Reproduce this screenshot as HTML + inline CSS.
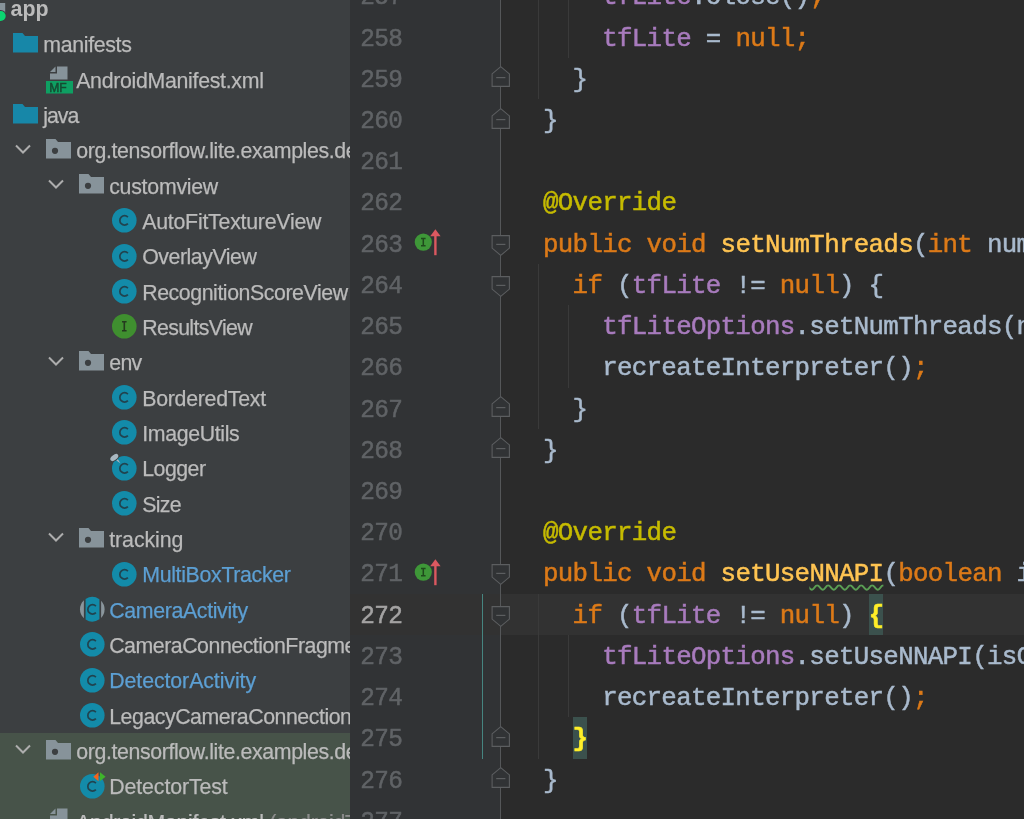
<!DOCTYPE html><html><head><meta charset="utf-8"><title>IDE</title><style>
*{box-sizing:border-box;margin:0;padding:0}
html,body{width:1024px;height:819px;overflow:hidden;background:#2b2b2b}
body{position:relative;will-change:transform;font-family:"Liberation Sans",sans-serif}
#side{position:absolute;left:0;top:0;width:350px;height:819px;background:#3c3f41;overflow:hidden}
#testbg{position:absolute;left:0;top:733px;width:350px;height:90px;background:#475349}
.row{position:absolute;left:0;width:700px;height:35.33px;line-height:35.33px;font-size:21.3px;color:#bbbbbb;white-space:nowrap;-webkit-text-stroke:0.25px currentColor}
.row span.t{position:absolute;top:1.6px;margin-left:-0.8px}
.row.b span.t{color:#5c9fd3}
.row svg{position:absolute}
#gutter{position:absolute;left:350px;top:0;width:152.3px;height:819px;background:#313335}
#ed{position:absolute;left:500px;top:0;width:524px;height:819px;background:#2b2b2b;overflow:hidden}
#cur{position:absolute;left:350px;width:674px;background:#323232}
.ln{position:absolute;left:359px;width:44.4px;text-align:left;transform:scaleX(0.945);transform-origin:22.4px 50%;font-family:"Liberation Mono",monospace;font-size:25.8px;letter-spacing:-0.683px;color:#606366;white-space:pre;-webkit-text-stroke:0.5px currentColor}
.ln.c{color:#a4a3a3}
.cl{position:absolute;left:513.4px;font-family:"Liberation Mono",monospace;font-size:25.8px;letter-spacing:-0.683px;color:#a9bacd;white-space:pre;-webkit-text-stroke:0.5px currentColor}
.k{color:#dc7a18}.f{color:#a87bbd}.a{color:#c6bb00}.m{color:#ffc452}
.br{color:#ffef28;font-weight:bold}
.brbg{position:absolute;width:14.8px;background:#3b514d}
.wv{text-decoration:underline wavy #5a9e54 1.5px;text-underline-offset:3px}
.g{position:absolute;width:1px;background:#3a3a3a}
#fold{position:absolute;left:500.1px;top:0;width:1.3px;height:819px;background:#555759}
svg.abs{position:absolute;overflow:visible}
</style></head><body>
<div id="side"><div id="testbg"></div>
<div class="row" style="top:-8.67px"><svg class="abs" style="left:0;top:2.66px" width="8" height="30" viewBox="0 0 8 30"><rect x="0" y="9" width="5.2" height="10" fill="#87939a"/><circle cx="0.6" cy="22" r="6" fill="#3c3f41"/><circle cx="0.6" cy="22" r="5.1" fill="#0bd671"/></svg><span class="t" style="left:11.4px;font-weight:bold;font-size:21.4px;top:0.9px;-webkit-text-stroke:0">app</span></div>
<div class="row" style="top:26.66px"><svg class="abs" style="left:13.2px;top:6.66px" width="25" height="20" viewBox="0 0 25 20"><path d="M0 0H9.5L12 3H25V19.5H0Z" fill="#1787a8"/></svg><span class="t" style="left:44px;letter-spacing:-0.308px">manifests</span></div>
<div class="row" style="top:61.99px"><svg class="abs" style="left:46px;top:3.66px" width="28" height="28" viewBox="0 0 28 28"><path d="M11 0.5H21.5V13.5H4V7.5H11Z" fill="#87939a"/><path d="M4 6L9.5 0.5V6Z" fill="#87939a"/><rect x="0" y="15" width="27" height="12.5" fill="#0e9f62"/><text x="3.2" y="26" font-family="Liberation Sans,sans-serif" font-size="12.6" textLength="17.5" lengthAdjust="spacingAndGlyphs" fill="#164a32" stroke="#164a32" stroke-width="0.5">MF</text></svg><span class="t" style="left:77px;letter-spacing:-0.293px">AndroidManifest.xml</span></div>
<div class="row" style="top:97.32px"><svg class="abs" style="left:13.2px;top:6.66px" width="25" height="20" viewBox="0 0 25 20"><path d="M0 0H9.5L12 3H25V19.5H0Z" fill="#1787a8"/></svg><span class="t" style="left:44px;letter-spacing:-0.989px">java</span></div>
<div class="row" style="top:132.65px"><svg class="abs" style="left:15px;top:11.16px" width="16" height="10" viewBox="0 0 16 10"><path d="M1 1.5L8 8.5L15 1.5" fill="none" stroke="#adadad" stroke-width="2"/></svg><svg class="abs" style="left:46px;top:6.46px" width="25" height="20" viewBox="0 0 25 20"><path d="M0 0H9.5L12 3H25V19.5H0Z" fill="#87939a"/><circle cx="9" cy="11.8" r="3.1" fill="#3c3f41"/></svg><span class="t" style="left:77px;letter-spacing:-0.366px">org.tensorflow.lite.examples.de</span></div>
<div class="row" style="top:167.98px"><svg class="abs" style="left:48px;top:11.16px" width="16" height="10" viewBox="0 0 16 10"><path d="M1 1.5L8 8.5L15 1.5" fill="none" stroke="#adadad" stroke-width="2"/></svg><svg class="abs" style="left:79px;top:6.46px" width="25" height="20" viewBox="0 0 25 20"><path d="M0 0H9.5L12 3H25V19.5H0Z" fill="#87939a"/><circle cx="9" cy="11.8" r="3.1" fill="#3c3f41"/></svg><span class="t" style="left:110px;letter-spacing:-0.244px">customview</span></div>
<div class="row" style="top:203.31px"><svg class="abs" style="left:112.1px;top:4.96px" width="24.6" height="24.6" viewBox="0 0 24.6 24.6"><circle cx="12.3" cy="12.3" r="12.3" fill="#138ba9"/><path d="M15.9 9.1A4.7 4.7 0 1 0 15.9 15.7" fill="none" stroke="#21434f" stroke-width="1.7"/></svg><span class="t" style="left:143px;letter-spacing:-0.225px">AutoFitTextureView</span></div>
<div class="row" style="top:238.64px"><svg class="abs" style="left:112.1px;top:4.96px" width="24.6" height="24.6" viewBox="0 0 24.6 24.6"><circle cx="12.3" cy="12.3" r="12.3" fill="#138ba9"/><path d="M15.9 9.1A4.7 4.7 0 1 0 15.9 15.7" fill="none" stroke="#21434f" stroke-width="1.7"/></svg><span class="t" style="left:143px;letter-spacing:-0.448px">OverlayView</span></div>
<div class="row" style="top:273.97px"><svg class="abs" style="left:112.1px;top:4.96px" width="24.6" height="24.6" viewBox="0 0 24.6 24.6"><circle cx="12.3" cy="12.3" r="12.3" fill="#138ba9"/><path d="M15.9 9.1A4.7 4.7 0 1 0 15.9 15.7" fill="none" stroke="#21434f" stroke-width="1.7"/></svg><span class="t" style="left:143px;letter-spacing:-0.423px">RecognitionScoreView</span></div>
<div class="row" style="top:309.30px"><svg class="abs" style="left:112.1px;top:4.96px" width="24.6" height="24.6" viewBox="0 0 24.6 24.6"><circle cx="12.3" cy="12.3" r="12.3" fill="#3f8f2f"/><path d="M10 7.8H14.6M10 16.8H14.6M12.3 7.8V16.8" fill="none" stroke="#243a1e" stroke-width="1.6"/></svg><span class="t" style="left:143px;letter-spacing:-0.639px">ResultsView</span></div>
<div class="row" style="top:344.63px"><svg class="abs" style="left:48px;top:11.16px" width="16" height="10" viewBox="0 0 16 10"><path d="M1 1.5L8 8.5L15 1.5" fill="none" stroke="#adadad" stroke-width="2"/></svg><svg class="abs" style="left:79px;top:6.46px" width="25" height="20" viewBox="0 0 25 20"><path d="M0 0H9.5L12 3H25V19.5H0Z" fill="#87939a"/><circle cx="9" cy="11.8" r="3.1" fill="#3c3f41"/></svg><span class="t" style="left:110px;letter-spacing:-0.645px">env</span></div>
<div class="row" style="top:379.96px"><svg class="abs" style="left:112.1px;top:4.96px" width="24.6" height="24.6" viewBox="0 0 24.6 24.6"><circle cx="12.3" cy="12.3" r="12.3" fill="#138ba9"/><path d="M15.9 9.1A4.7 4.7 0 1 0 15.9 15.7" fill="none" stroke="#21434f" stroke-width="1.7"/></svg><span class="t" style="left:143px;letter-spacing:-0.253px">BorderedText</span></div>
<div class="row" style="top:415.29px"><svg class="abs" style="left:112.1px;top:4.96px" width="24.6" height="24.6" viewBox="0 0 24.6 24.6"><circle cx="12.3" cy="12.3" r="12.3" fill="#138ba9"/><path d="M15.9 9.1A4.7 4.7 0 1 0 15.9 15.7" fill="none" stroke="#21434f" stroke-width="1.7"/></svg><span class="t" style="left:143px;letter-spacing:-0.340px">ImageUtils</span></div>
<div class="row" style="top:450.62px"><svg class="abs" style="left:112.1px;top:4.96px" width="24.6" height="24.6" viewBox="0 0 24.6 24.6"><circle cx="12.3" cy="12.3" r="12.3" fill="#138ba9"/><path d="M15.9 9.1A4.7 4.7 0 1 0 15.9 15.7" fill="none" stroke="#21434f" stroke-width="1.7"/></svg><svg class="abs" style="left:108.1px;top:0.66px" width="16" height="16" viewBox="0 0 16 16"><ellipse cx="6.3" cy="6.5" rx="5.6" ry="3.6" transform="rotate(-38 6.3 6.5)" fill="#3c3f41"/><ellipse cx="6.3" cy="6.5" rx="4.6" ry="2.5" transform="rotate(-38 6.3 6.5)" fill="#a9b7c0"/><path d="M8.3 9.6L9.9 8.2L12.4 12.2Z" fill="#a9b7c0"/></svg><span class="t" style="left:143px;letter-spacing:-0.498px">Logger</span></div>
<div class="row" style="top:485.95px"><svg class="abs" style="left:112.1px;top:4.96px" width="24.6" height="24.6" viewBox="0 0 24.6 24.6"><circle cx="12.3" cy="12.3" r="12.3" fill="#138ba9"/><path d="M15.9 9.1A4.7 4.7 0 1 0 15.9 15.7" fill="none" stroke="#21434f" stroke-width="1.7"/></svg><span class="t" style="left:143px;letter-spacing:-0.669px">Size</span></div>
<div class="row" style="top:521.28px"><svg class="abs" style="left:48px;top:11.16px" width="16" height="10" viewBox="0 0 16 10"><path d="M1 1.5L8 8.5L15 1.5" fill="none" stroke="#adadad" stroke-width="2"/></svg><svg class="abs" style="left:79px;top:6.46px" width="25" height="20" viewBox="0 0 25 20"><path d="M0 0H9.5L12 3H25V19.5H0Z" fill="#87939a"/><circle cx="9" cy="11.8" r="3.1" fill="#3c3f41"/></svg><span class="t" style="left:110px;letter-spacing:-0.050px">tracking</span></div>
<div class="row b" style="top:556.61px"><svg class="abs" style="left:112.1px;top:4.96px" width="24.6" height="24.6" viewBox="0 0 24.6 24.6"><circle cx="12.3" cy="12.3" r="12.3" fill="#138ba9"/><path d="M15.9 9.1A4.7 4.7 0 1 0 15.9 15.7" fill="none" stroke="#21434f" stroke-width="1.7"/></svg><span class="t" style="left:143px;letter-spacing:-0.311px">MultiBoxTracker</span></div>
<div class="row b" style="top:591.94px"><svg class="abs" style="left:79.6px;top:4.96px" width="24.6" height="24.6" viewBox="0 0 24.6 24.6"><path d="M3.9 3.315A12.3 12.3 0 0 0 3.9 21.285Z" fill="#8a969c"/><path d="M5.6 1.985A12.3 12.3 0 0 1 19.4 2.256V22.344A12.3 12.3 0 0 1 5.6 22.615Z" fill="#138ba9"/><path d="M21.1 3.706A12.3 12.3 0 0 1 21.1 20.894Z" fill="#8a969c"/><path d="M15.9 9.1A4.7 4.7 0 1 0 15.9 15.7" fill="none" stroke="#21434f" stroke-width="1.7"/></svg><span class="t" style="left:110px;letter-spacing:-0.334px">CameraActivity</span></div>
<div class="row" style="top:627.27px"><svg class="abs" style="left:79.6px;top:4.96px" width="24.6" height="24.6" viewBox="0 0 24.6 24.6"><circle cx="12.3" cy="12.3" r="12.3" fill="#138ba9"/><path d="M15.9 9.1A4.7 4.7 0 1 0 15.9 15.7" fill="none" stroke="#21434f" stroke-width="1.7"/></svg><span class="t" style="left:110px;letter-spacing:-0.459px">CameraConnectionFragme</span></div>
<div class="row b" style="top:662.60px"><svg class="abs" style="left:79.6px;top:4.96px" width="24.6" height="24.6" viewBox="0 0 24.6 24.6"><circle cx="12.3" cy="12.3" r="12.3" fill="#138ba9"/><path d="M15.9 9.1A4.7 4.7 0 1 0 15.9 15.7" fill="none" stroke="#21434f" stroke-width="1.7"/></svg><span class="t" style="left:110px;letter-spacing:-0.070px">DetectorActivity</span></div>
<div class="row" style="top:697.93px"><svg class="abs" style="left:79.6px;top:4.96px" width="24.6" height="24.6" viewBox="0 0 24.6 24.6"><circle cx="12.3" cy="12.3" r="12.3" fill="#138ba9"/><path d="M15.9 9.1A4.7 4.7 0 1 0 15.9 15.7" fill="none" stroke="#21434f" stroke-width="1.7"/></svg><span class="t" style="left:110px;letter-spacing:-0.451px">LegacyCameraConnection</span></div>
<div class="row" style="top:733.26px"><svg class="abs" style="left:15px;top:11.16px" width="16" height="10" viewBox="0 0 16 10"><path d="M1 1.5L8 8.5L15 1.5" fill="none" stroke="#adadad" stroke-width="2"/></svg><svg class="abs" style="left:46px;top:6.46px" width="25" height="20" viewBox="0 0 25 20"><path d="M0 0H9.5L12 3H25V19.5H0Z" fill="#87939a"/><circle cx="9" cy="11.8" r="3.1" fill="#3c3f41"/></svg><span class="t" style="left:77px;letter-spacing:-0.366px">org.tensorflow.lite.examples.de</span></div>
<div class="row" style="top:768.59px"><svg class="abs" style="left:79.6px;top:4.96px" width="24.6" height="24.6" viewBox="0 0 24.6 24.6"><circle cx="12.3" cy="12.3" r="12.3" fill="#138ba9"/><path d="M15.9 9.1A4.7 4.7 0 1 0 15.9 15.7" fill="none" stroke="#21434f" stroke-width="1.7"/></svg><svg class="abs" style="left:93.19999999999999px;top:3.26px" width="13" height="10" viewBox="0 0 13 10"><path d="M5.5 0.3V9.3L0.3 4.8Z" fill="#f2641f"/><path d="M7 0.3V9L12.6 4.8Z" fill="#3fb52b"/></svg><span class="t" style="left:110px;letter-spacing:-0.088px">DetectorTest</span></div>
<div class="row" style="top:803.92px"><svg class="abs" style="left:46px;top:3.66px" width="28" height="28" viewBox="0 0 28 28"><path d="M11 0.5H21.5V13.5H4V7.5H11Z" fill="#87939a"/><path d="M4 6L9.5 0.5V6Z" fill="#87939a"/><rect x="0" y="15" width="27" height="12.5" fill="#0e9f62"/><text x="3.2" y="26" font-family="Liberation Sans,sans-serif" font-size="12.6" textLength="17.5" lengthAdjust="spacingAndGlyphs" fill="#164a32" stroke="#164a32" stroke-width="0.5">MF</text></svg><span class="t" style="left:77px;letter-spacing:-0.293px">AndroidManifest.xml <span style="color:#8c8c8c">(androidTest)</span></span></div>
</div>
<div id="gutter"></div>
<div id="ed"></div>
<div id="cur" style="top:593.78px;height:41.22px"></div>
<div class="g" style="left:538px;top:-65.74px;height:164.88px"></div>
<div class="g" style="left:567.5px;top:-65.74px;height:123.66px"></div>
<div class="g" style="left:538px;top:264.02px;height:164.88px"></div>
<div class="g" style="left:567.5px;top:305.24px;height:82.44px"></div>
<div class="g" style="left:538px;top:593.78px;height:164.88px"></div>
<div class="g" style="left:567.5px;top:635.00px;height:82.44px"></div>
<div class="brbg" style="left:868.60px;top:593.78px;height:41.22px"></div>
<div class="brbg" style="left:572.60px;top:717.44px;height:41.22px"></div>
<div id="fold"></div>
<div style="position:absolute;left:482px;width:1.4px;background:#468580;top:593.78px;height:164.88px"></div>
<svg class="abs" style="left:491px;top:66.33px" width="20" height="22" viewBox="0 0 20 22"><path d="M1.1 7.9L9.75 0.6L18.4 7.9V20.4H1.1Z" fill="#313335" stroke="#5c5e60" stroke-width="1.1"/><path d="M5.2 11.6H14.4" stroke="#5c5e60" stroke-width="1.2"/></svg>
<svg class="abs" style="left:491px;top:107.55px" width="20" height="22" viewBox="0 0 20 22"><path d="M1.1 7.9L9.75 0.6L18.4 7.9V20.4H1.1Z" fill="#313335" stroke="#5c5e60" stroke-width="1.1"/><path d="M5.2 11.6H14.4" stroke="#5c5e60" stroke-width="1.2"/></svg>
<svg class="abs" style="left:491px;top:396.09px" width="20" height="22" viewBox="0 0 20 22"><path d="M1.1 7.9L9.75 0.6L18.4 7.9V20.4H1.1Z" fill="#313335" stroke="#5c5e60" stroke-width="1.1"/><path d="M5.2 11.6H14.4" stroke="#5c5e60" stroke-width="1.2"/></svg>
<svg class="abs" style="left:491px;top:437.31px" width="20" height="22" viewBox="0 0 20 22"><path d="M1.1 7.9L9.75 0.6L18.4 7.9V20.4H1.1Z" fill="#313335" stroke="#5c5e60" stroke-width="1.1"/><path d="M5.2 11.6H14.4" stroke="#5c5e60" stroke-width="1.2"/></svg>
<svg class="abs" style="left:491px;top:725.85px" width="20" height="22" viewBox="0 0 20 22"><path d="M1.1 7.9L9.75 0.6L18.4 7.9V20.4H1.1Z" fill="#313335" stroke="#5c5e60" stroke-width="1.1"/><path d="M5.2 11.6H14.4" stroke="#5c5e60" stroke-width="1.2"/></svg>
<svg class="abs" style="left:491px;top:767.07px" width="20" height="22" viewBox="0 0 20 22"><path d="M1.1 7.9L9.75 0.6L18.4 7.9V20.4H1.1Z" fill="#313335" stroke="#5c5e60" stroke-width="1.1"/><path d="M5.2 11.6H14.4" stroke="#5c5e60" stroke-width="1.2"/></svg>
<svg class="abs" style="left:491px;top:234.61px" width="20" height="22" viewBox="0 0 20 22"><path d="M1.1 0.6H18.4V13.1L9.75 20.4L1.1 13.1Z" fill="#313335" stroke="#5c5e60" stroke-width="1.1"/><path d="M5.2 9.4H14.4" stroke="#5c5e60" stroke-width="1.2"/></svg>
<svg class="abs" style="left:491px;top:275.83px" width="20" height="22" viewBox="0 0 20 22"><path d="M1.1 0.6H18.4V13.1L9.75 20.4L1.1 13.1Z" fill="#313335" stroke="#5c5e60" stroke-width="1.1"/><path d="M5.2 9.4H14.4" stroke="#5c5e60" stroke-width="1.2"/></svg>
<svg class="abs" style="left:491px;top:564.37px" width="20" height="22" viewBox="0 0 20 22"><path d="M1.1 0.6H18.4V13.1L9.75 20.4L1.1 13.1Z" fill="#313335" stroke="#5c5e60" stroke-width="1.1"/><path d="M5.2 9.4H14.4" stroke="#5c5e60" stroke-width="1.2"/></svg>
<svg class="abs" style="left:491px;top:605.59px" width="20" height="22" viewBox="0 0 20 22"><path d="M1.1 0.6H18.4V13.1L9.75 20.4L1.1 13.1Z" fill="#313335" stroke="#5c5e60" stroke-width="1.1"/><path d="M5.2 9.4H14.4" stroke="#5c5e60" stroke-width="1.2"/></svg>
<svg class="abs" style="left:414px;top:229.41px" width="28" height="28" viewBox="0 0 28 28"><circle cx="9.3" cy="13.1" r="8.6" fill="#3e9738"/><path d="M7 9.4H11.6M7 16.8H11.6M9.3 9.4V16.8" stroke="#1f4a1c" stroke-width="1.5" fill="none"/><path d="M21.4 26.2V6" stroke="#db5860" stroke-width="2.4"/><path d="M16.2 7.3L21.4 0.3L26.6 7.3Z" fill="#db5860"/></svg>
<svg class="abs" style="left:414px;top:559.17px" width="28" height="28" viewBox="0 0 28 28"><circle cx="9.3" cy="13.1" r="8.6" fill="#3e9738"/><path d="M7 9.4H11.6M7 16.8H11.6M9.3 9.4V16.8" stroke="#1f4a1c" stroke-width="1.5" fill="none"/><path d="M21.4 26.2V6" stroke="#db5860" stroke-width="2.4"/><path d="M16.2 7.3L21.4 0.3L26.6 7.3Z" fill="#db5860"/></svg>
<div class="ln" style="top:-22.62px;line-height:41.22px">257</div>
<div class="ln" style="top:18.60px;line-height:41.22px">258</div>
<div class="ln" style="top:59.82px;line-height:41.22px">259</div>
<div class="ln" style="top:101.04px;line-height:41.22px">260</div>
<div class="ln" style="top:142.26px;line-height:41.22px">261</div>
<div class="ln" style="top:183.48px;line-height:41.22px">262</div>
<div class="ln" style="top:224.70px;line-height:41.22px">263</div>
<div class="ln" style="top:265.92px;line-height:41.22px">264</div>
<div class="ln" style="top:307.14px;line-height:41.22px">265</div>
<div class="ln" style="top:348.36px;line-height:41.22px">266</div>
<div class="ln" style="top:389.58px;line-height:41.22px">267</div>
<div class="ln" style="top:430.80px;line-height:41.22px">268</div>
<div class="ln" style="top:472.02px;line-height:41.22px">269</div>
<div class="ln" style="top:513.24px;line-height:41.22px">270</div>
<div class="ln" style="top:554.46px;line-height:41.22px">271</div>
<div class="ln c" style="top:595.68px;line-height:41.22px">272</div>
<div class="ln" style="top:636.90px;line-height:41.22px">273</div>
<div class="ln" style="top:678.12px;line-height:41.22px">274</div>
<div class="ln" style="top:719.34px;line-height:41.22px">275</div>
<div class="ln" style="top:760.56px;line-height:41.22px">276</div>
<div class="ln" style="top:801.78px;line-height:41.22px">277</div>
<div class="cl" style="top:-22.62px;line-height:41.22px">      <span class="f">tfLite</span>.close()<span class="k">;</span></div>
<div class="cl" style="top:18.60px;line-height:41.22px">      <span class="f">tfLite</span> = <span class="k">null;</span></div>
<div class="cl" style="top:59.82px;line-height:41.22px">    }</div>
<div class="cl" style="top:101.04px;line-height:41.22px">  }</div>
<div class="cl" style="top:183.48px;line-height:41.22px">  <span class="a">@Override</span></div>
<div class="cl" style="top:224.70px;line-height:41.22px">  <span class="k">public void </span><span class="m">setNumThreads</span>(<span class="k">int </span>numThreads) {</div>
<div class="cl" style="top:265.92px;line-height:41.22px">    <span class="k">if </span>(<span class="f">tfLite</span> != <span class="k">null</span>) {</div>
<div class="cl" style="top:307.14px;line-height:41.22px">      <span class="f">tfLiteOptions</span>.setNumThreads(numThreads)<span class="k">;</span></div>
<div class="cl" style="top:348.36px;line-height:41.22px">      recreateInterpreter()<span class="k">;</span></div>
<div class="cl" style="top:389.58px;line-height:41.22px">    }</div>
<div class="cl" style="top:430.80px;line-height:41.22px">  }</div>
<div class="cl" style="top:513.24px;line-height:41.22px">  <span class="a">@Override</span></div>
<div class="cl" style="top:554.46px;line-height:41.22px">  <span class="k">public void </span><span class="m">setUse<span class="wv">NNAPI</span></span>(<span class="k">boolean </span>isChecked) {</div>
<div class="cl" style="top:595.68px;line-height:41.22px">    <span class="k">if </span>(<span class="f">tfLite</span> != <span class="k">null</span>) <span class="br">{</span></div>
<div class="cl" style="top:636.90px;line-height:41.22px">      <span class="f">tfLiteOptions</span>.setUseNNAPI(isChecked)<span class="k">;</span></div>
<div class="cl" style="top:678.12px;line-height:41.22px">      recreateInterpreter()<span class="k">;</span></div>
<div class="cl" style="top:719.34px;line-height:41.22px">    <span class="br">}</span></div>
<div class="cl" style="top:760.56px;line-height:41.22px">  }</div>
</body></html>
